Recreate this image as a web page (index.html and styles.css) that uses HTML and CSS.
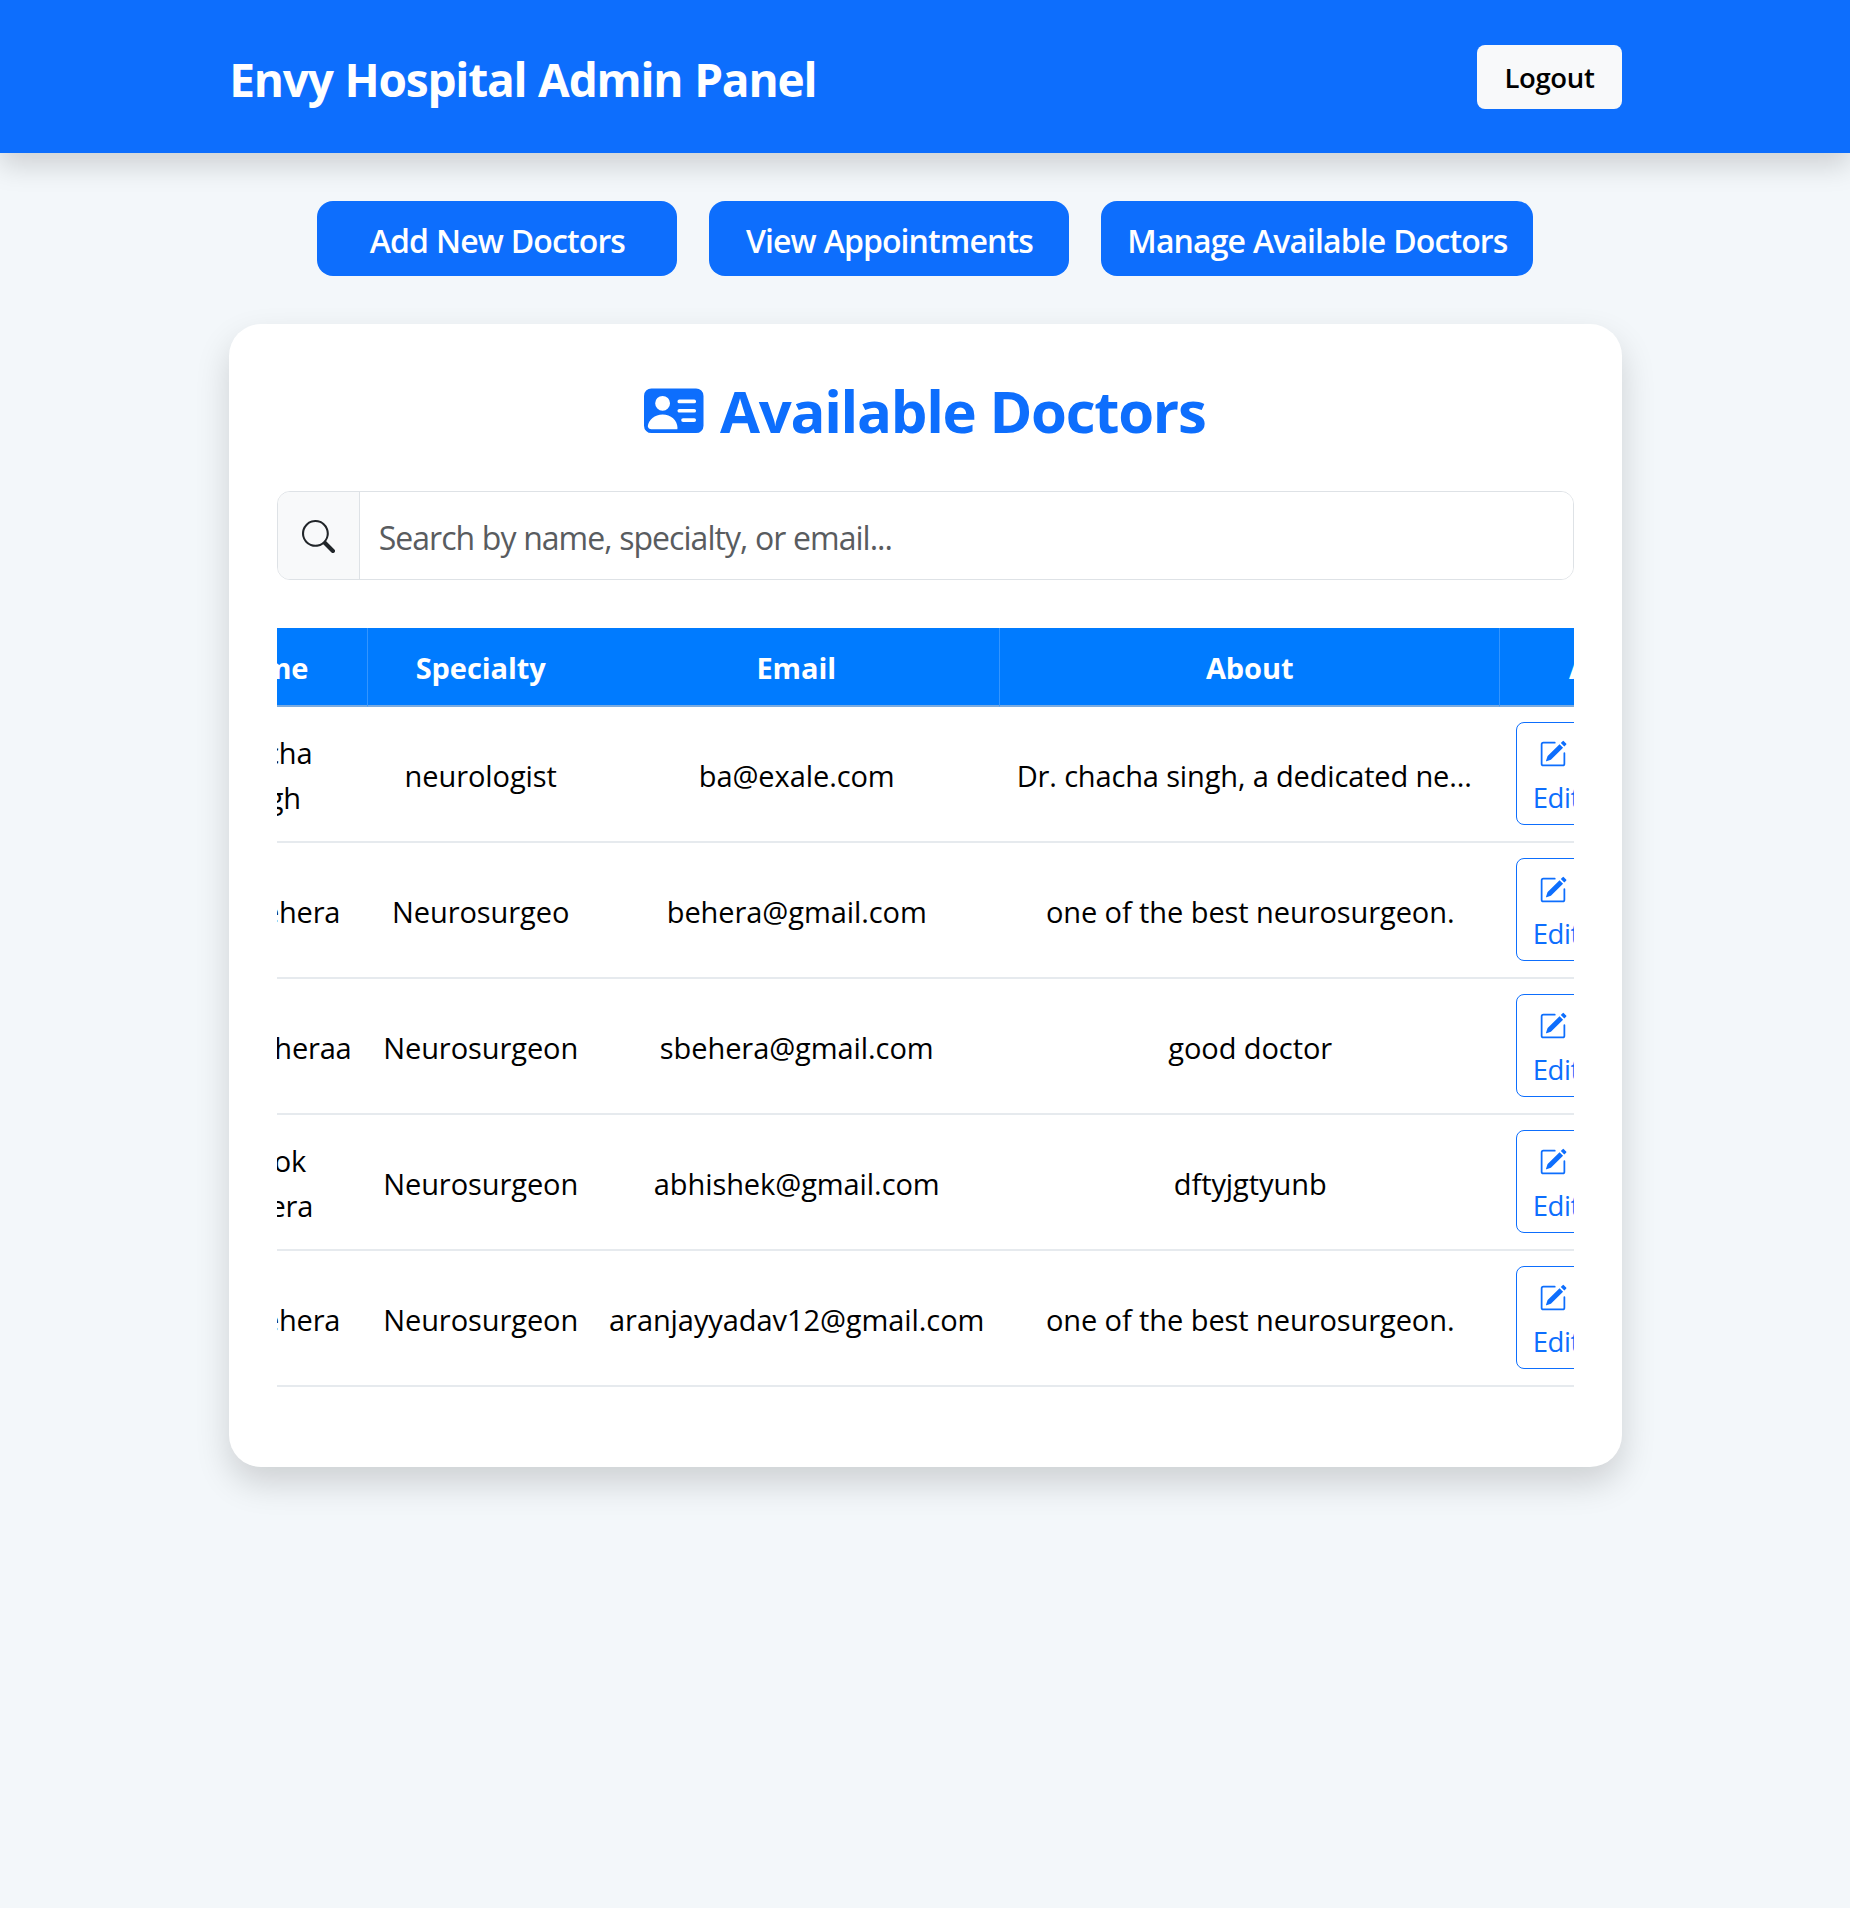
FILE: index.html
```
<!DOCTYPE html>
<html lang="en">
<head>
<meta charset="utf-8">
<title>Envy Hospital Admin Panel</title>
<link rel="stylesheet" href="styles.css">
</head>
<body>
<svg width="0" height="0" class="sprite" aria-hidden="true">
  <symbol id="pencil-square" viewBox="0 0 16 16">
    <path d="M15.502 1.94a.5.5 0 0 1 0 .706L14.459 3.69l-2-2L13.502.646a.5.5 0 0 1 .707 0l1.293 1.293zm-1.75 2.456-2-2L4.939 9.21a.5.5 0 0 0-.121.196l-.805 2.414a.25.25 0 0 0 .316.316l2.414-.805a.5.5 0 0 0 .196-.12l6.813-6.814z"/>
    <path fill-rule="evenodd" d="M1 13.5A1.5 1.5 0 0 0 2.5 15h11a1.5 1.5 0 0 0 1.5-1.5v-6a.5.5 0 0 0-1 0v6a.5.5 0 0 1-.5.5h-11a.5.5 0 0 1-.5-.5v-11a.5.5 0 0 1 .5-.5H9a.5.5 0 0 0 0-1H2.5A1.5 1.5 0 0 0 1 2.5z"/>
  </symbol>
</svg>
<header class="topbar">
  <div class="container topbar-row">
    <h1 class="brand">Envy Hospital Admin Panel</h1>
    <button class="logout">Logout</button>
  </div>
</header>
<nav class="actions">
  <button class="action">Add New Doctors</button>
  <button class="action">View Appointments</button>
  <button class="action wide">Manage Available Doctors</button>
</nav>
<main class="container card">
  <h2 class="title">
    <svg class="title-icon" viewBox="0 0 16 16" fill="currentColor"><path d="M0 4a2 2 0 0 1 2-2h12a2 2 0 0 1 2 2v8a2 2 0 0 1-2 2H2a2 2 0 0 1-2-2zm9 1.5a.5.5 0 0 0 .5.5h4a.5.5 0 0 0 0-1h-4a.5.5 0 0 0-.5.5M9 8a.5.5 0 0 0 .5.5h4a.5.5 0 0 0 0-1h-4A.5.5 0 0 0 9 8m1 2.5a.5.5 0 0 0 .5.5h3a.5.5 0 0 0 0-1h-3a.5.5 0 0 0-.5.5m-1 2C9 10.567 7.21 9 5 9c-2.086 0-3.8 1.398-3.984 3.181A1 1 0 0 0 2 13h6.96q.04-.245.04-.5M7 6a2 2 0 1 0-4 0 2 2 0 0 0 4 0"/></svg>
    <span>Available Doctors</span>
  </h2>
  <div class="search">
    <span class="search-addon">
      <svg class="search-icon" viewBox="0 0 16 16" fill="currentColor"><path d="M11.742 10.344a6.5 6.5 0 1 0-1.397 1.398h-.001q.044.06.098.115l3.85 3.85a1 1 0 0 0 1.415-1.414l-3.85-3.85a1 1 0 0 0-.115-.1zM12 6.5a5.5 5.5 0 1 1-11 0 5.5 5.5 0 0 1 11 0"/></svg>
    </span>
    <input class="search-input" type="text" placeholder="Search by name, specialty, or email...">
  </div>
  <div class="table-wrap">
    <table class="doctors">
      <colgroup><col class="c-name"><col class="c-spec"><col class="c-mail"><col class="c-about"><col class="c-act"></colgroup>
      <thead>
        <tr><th class="name">Name</th><th class="plain">Specialty</th><th>Email</th><th>About</th><th class="last">Actions</th></tr>
      </thead>
      <tbody>
        <tr><td class="name two-line">chacha<br>singh</td><td>neurologist</td><td>ba@exale.com</td><td class="long">Dr. chacha singh, a dedicated ne...</td><td class="act"><button class="edit"><svg viewBox="0 0 16 16"><use href="#pencil-square"/></svg><span>Edit</span></button></td></tr>
        <tr><td class="name short">Dr. Behera</td><td>Neurosurgeo</td><td>behera@gmail.com</td><td>one of the best neurosurgeon.</td><td class="act"><button class="edit"><svg viewBox="0 0 16 16"><use href="#pencil-square"/></svg><span>Edit</span></button></td></tr>
        <tr><td class="name">Dr. sbeheraa</td><td>Neurosurgeon</td><td>sbehera@gmail.com</td><td>good doctor</td><td class="act"><button class="edit"><svg viewBox="0 0 16 16"><use href="#pencil-square"/></svg><span>Edit</span></button></td></tr>
        <tr><td class="name two-line">Ashok<br>Behera</td><td>Neurosurgeon</td><td>abhishek@gmail.com</td><td>dftyjgtyunb</td><td class="act"><button class="edit"><svg viewBox="0 0 16 16"><use href="#pencil-square"/></svg><span>Edit</span></button></td></tr>
        <tr><td class="name short">Dr. Behera</td><td>Neurosurgeon</td><td>aranjayyadav12@gmail.com</td><td>one of the best neurosurgeon.</td><td class="act"><button class="edit"><svg viewBox="0 0 16 16"><use href="#pencil-square"/></svg><span>Edit</span></button></td></tr>
      </tbody>
    </table>
  </div>
</main>
</body>
</html>
```
FILE: styles.css
```
* { box-sizing: border-box; }
body {
  margin: 0;
  min-height: 1908px;
  background: #f3f7fa;
  color: #000;
  font-family: "Open Sans", "Noto Sans", sans-serif;
}
h1, h2 { margin: 0; }
button { font-family: inherit; border: 0; }
.sprite { position: absolute; }
.container { width: 1392.5px; margin-left: 229.2px; }

.topbar {
  height: 153.3px;
  background: #0d6efd;
  box-shadow: 0 13px 26px rgba(0, 0, 0, .15);
}
.topbar-row {
  display: flex;
  justify-content: space-between;
  align-items: flex-start;
  padding-top: 45.2px;
}
.brand {
  padding-top: 2.5px;
  color: #fff;
  font-size: 46px;
  font-weight: 700;
  line-height: 63px;
  letter-spacing: -1.2px;
  word-spacing: 1px;
}
.logout {
  width: 144.5px;
  height: 64.3px;
  padding: 0;
  border-radius: 8px;
  background: #f8f9fa;
  color: #000;
  font-size: 27.5px;
  font-weight: 600;
  letter-spacing: -.34px;
}

.actions {
  display: flex;
  gap: 32px;
  margin: 48px 0 48px 317.4px;
}
.action {
  width: 360px;
  height: 74.7px;
  padding: 3px 0 0;
  border-radius: 16px;
  background: #0d6efd;
  color: #fff;
  font-size: 32px;
  font-weight: 600;
  letter-spacing: -.9px;
  word-spacing: .5px;
}
.action.wide { width: 432px; }

.card {
  height: 1143px;
  padding: 48px;
  border-radius: 32px;
  background: #fff;
  box-shadow: 0 16px 34px rgba(0, 0, 0, .155);
}
.title {
  display: flex;
  justify-content: center;
  align-items: center;
  gap: 16px;
  height: 77px;
  padding-right: 1px;
  color: #0d6efd;
  font-size: 58px;
  font-weight: 700;
  line-height: 77px;
  letter-spacing: -1.27px;
}
.title-icon { width: 59.5px; height: 59.5px; }

.search {
  display: flex;
  height: 89px;
  margin-top: 42px;
  border: 1px solid #dee2e6;
  border-radius: 13px;
  overflow: hidden;
}
.search-addon {
  display: flex;
  align-items: center;
  justify-content: center;
  width: 81.5px;
  padding: 3px 0 0 1px;
  border-right: 1px solid #dee2e6;
  background: #f8f9fa;
  color: #212529;
}
.search-icon { width: 33px; height: 33px; }
.search-input {
  flex: 1;
  padding: 4px 19px 0 19px;
  border: 0;
  outline: 0;
  background: #fff;
  font: 400 32px "Open Sans", sans-serif;
  letter-spacing: -.97px;
  word-spacing: .3px;
}
.search-input::placeholder { color: #595c5f; opacity: 1; }

/* Horizontally scrolled table: the first column sits partly past the left edge. */
.table-wrap { margin-top: 48px; overflow: hidden; }
.doctors {
  table-layout: fixed;
  width: 1564px;
  margin-left: -104px;
  border-collapse: separate;
  border-spacing: 0;
  font-size: 29px;
  line-height: 45px;
  text-align: center;
  letter-spacing: -.08px;
}
.c-name { width: 195px; }
.c-spec { width: 225px; }
.c-mail { width: 407px; }
.c-about { width: 500px; }
.c-act { width: 237px; }
th {
  height: 79px;
  padding: 3px 0 0;
  border-right: 1px solid #3395ff;
  border-bottom: 2px solid #7babdf;
  background: #007bff;
  color: #fff;
  font-weight: 700;
}
th.plain { border-right: 0; }
th.last { padding-left: 9px; }
td {
  height: 136px;
  padding: 4px 0 0;
  border-bottom: 2px solid #e6eaee;
  white-space: nowrap;
}
th.name { padding-right: 10px; }
td.name { padding: 3px 10px 0 0; letter-spacing: -.2px; }
td.two-line { padding-right: 11px; }
td.short { padding-right: 4px; }
td.long { padding-right: 12px; letter-spacing: -.15px; }
td.act { text-align: left; padding: 0 0 0 15.5px; }
.edit {
  display: flex;
  flex-direction: column;
  align-items: flex-start;
  width: 86px;
  height: 103px;
  padding: 16.5px 0 0 17px;
  border: 1px solid #0d6efd;
  border-radius: 8px;
  background: #fff;
  color: #0d6efd;
  font-size: 27.5px;
  line-height: 42px;
  letter-spacing: -.4px;
}
.edit svg { width: 28px; height: 28px; margin: 0 0 9px 5px; fill: currentColor; }
.edit span { margin-left: -1px; }
```
